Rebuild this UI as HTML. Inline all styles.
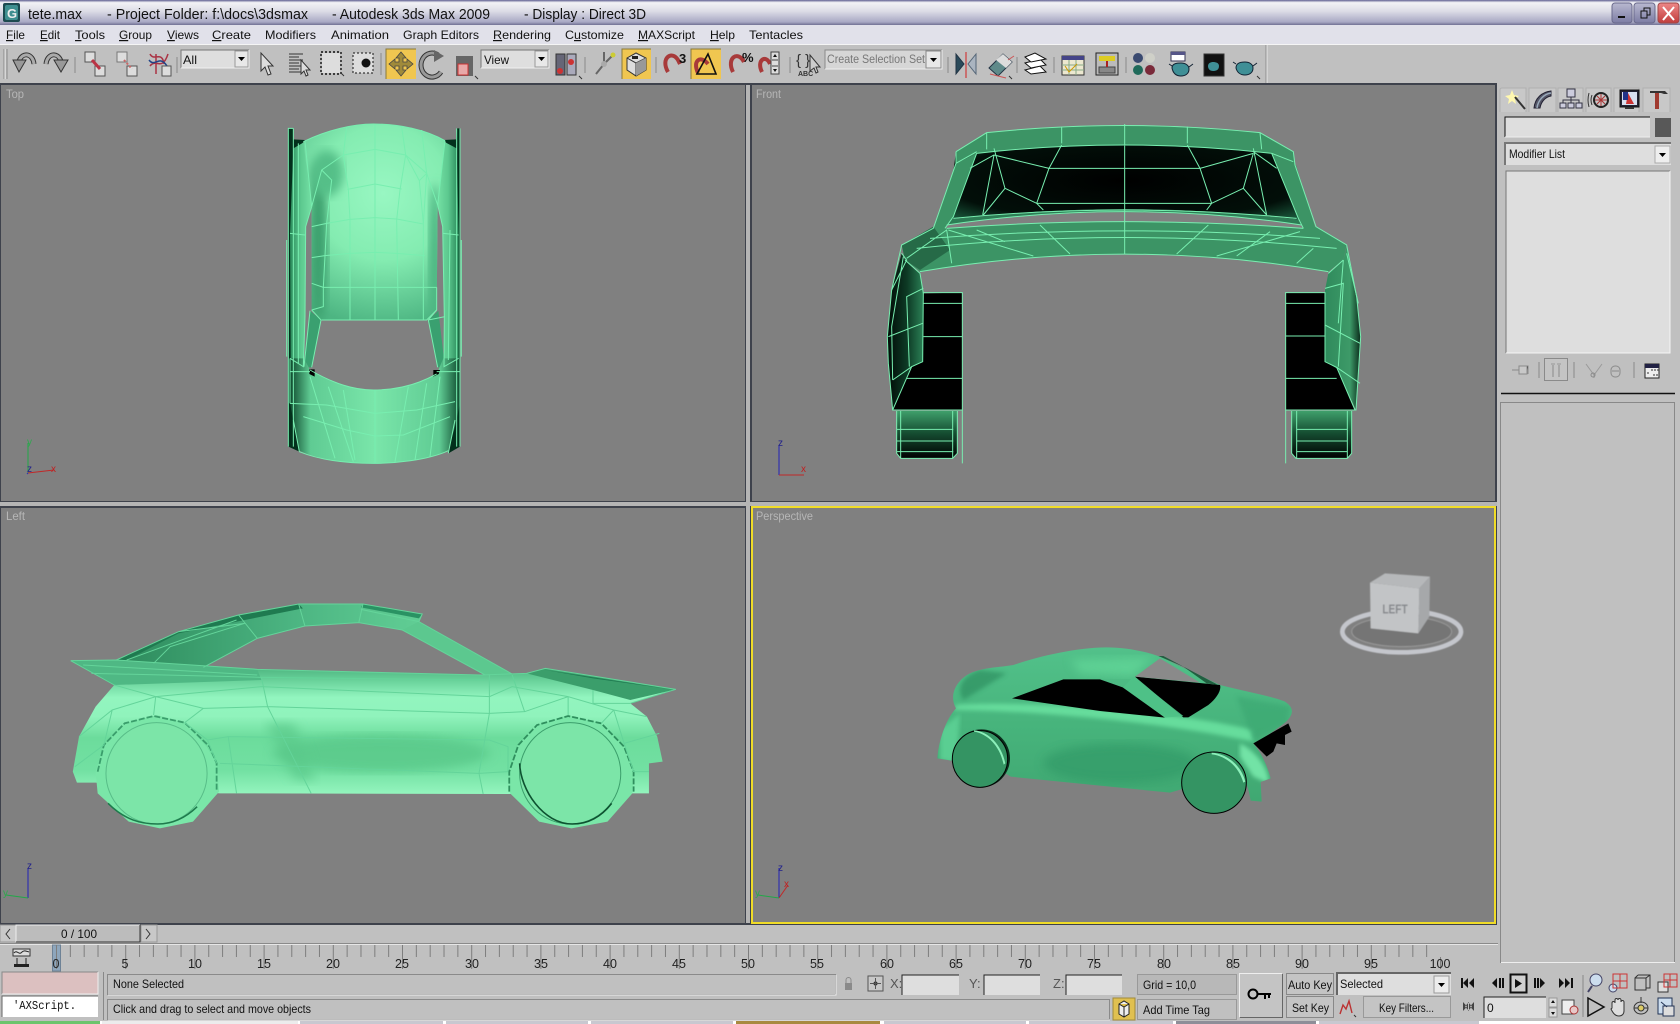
<!DOCTYPE html>
<html><head><meta charset="utf-8"><title>tete.max - Autodesk 3ds Max 2009</title>
<style>
html,body{margin:0;padding:0;background:#c0c0c0;overflow:hidden}
svg{display:block;font-family:"Liberation Sans",sans-serif}
text{font-size:12px;fill:#111}
.w,.w *{fill:none;stroke:#78eeb0;stroke-width:1;vector-effect:non-scaling-stroke}
.w2,.w2 *{fill:none;stroke:#64d49a;stroke-width:1;vector-effect:non-scaling-stroke}
.vl{fill:#b6b6b6;font-size:12px}
.ax{font-size:10px}
.n{font-size:12.5px;fill:#222;text-anchor:middle}
.ic{fill:none;stroke:#333;stroke-width:1}
</style></head><body>
<svg width="1680" height="1024" viewBox="0 0 1680 1024" xmlns="http://www.w3.org/2000/svg">
<defs>
<linearGradient id="tb" x1="0" y1="0" x2="0" y2="1"><stop offset="0" stop-color="#5e5e90"/><stop offset=".1" stop-color="#f2f2f6"/><stop offset=".45" stop-color="#dcdce6"/><stop offset=".88" stop-color="#a9a9c4"/><stop offset="1" stop-color="#6e6e92"/></linearGradient>
<linearGradient id="bb" x1="0" y1="0" x2="0" y2="1"><stop offset="0" stop-color="#b8b8d0"/><stop offset="1" stop-color="#7c7ca4"/></linearGradient>
<linearGradient id="rb" x1="0" y1="0" x2="0" y2="1"><stop offset="0" stop-color="#e88"/><stop offset="1" stop-color="#c03c3c"/></linearGradient>
<radialGradient id="topg" gradientUnits="userSpaceOnUse" cx="370" cy="250" r="400"><stop offset="0" stop-color="#98f7c2"/><stop offset=".5" stop-color="#84ecb1"/><stop offset="1" stop-color="#4db582"/></radialGradient>
<linearGradient id="topl" x1="0" y1="0" x2="1" y2="0"><stop offset="0" stop-color="#0f4a2e"/><stop offset=".12" stop-color="#5fcb93"/><stop offset=".5" stop-color="#7ae6aa"/><stop offset=".88" stop-color="#5fcb93"/><stop offset="1" stop-color="#0f4a2e"/></linearGradient>
<linearGradient id="tops" x1="0" y1="0" x2="1" y2="0"><stop offset="0" stop-color="#2a8a5a"/><stop offset=".5" stop-color="#5cc88f"/><stop offset="1" stop-color="#74e0a4"/></linearGradient>
<linearGradient id="tops2" x1="0" y1="0" x2="1" y2="0"><stop offset="0" stop-color="#74e0a4"/><stop offset=".5" stop-color="#5cc88f"/><stop offset="1" stop-color="#2a8a5a"/></linearGradient>
<radialGradient id="wind" cx=".5" cy=".5" r=".72"><stop offset="0" stop-color="#000"/><stop offset=".7" stop-color="#020f09"/><stop offset="1" stop-color="#1f6a48"/></radialGradient>
<linearGradient id="fl" x1="0" y1="0" x2="1" y2="0"><stop offset="0" stop-color="#010a06"/><stop offset=".55" stop-color="#0d3a25"/><stop offset="1" stop-color="#2b8055"/></linearGradient>
<linearGradient id="fr" x1="0" y1="0" x2="1" y2="0"><stop offset="0" stop-color="#2f8a5c"/><stop offset=".7" stop-color="#3d9a68"/><stop offset="1" stop-color="#0a2a1a"/></linearGradient>
<linearGradient id="ty" x1="0" y1="0" x2="0" y2="1"><stop offset="0" stop-color="#3f9f6b"/><stop offset=".45" stop-color="#165033"/><stop offset="1" stop-color="#000"/></linearGradient>
<linearGradient id="lb" x1="0" y1="0" x2="0" y2="1"><stop offset="0" stop-color="#3ea470"/><stop offset=".13" stop-color="#62cb94"/><stop offset=".28" stop-color="#92f5bf"/><stop offset=".42" stop-color="#90f3bc"/><stop offset=".58" stop-color="#6cdc9c"/><stop offset=".82" stop-color="#72e0a2"/><stop offset="1" stop-color="#94f5be"/></linearGradient>
<linearGradient id="la" x1="0" y1="0" x2="1" y2="0"><stop offset="0" stop-color="#2d8a5c"/><stop offset=".45" stop-color="#4cb582"/><stop offset="1" stop-color="#70dfa2"/></linearGradient>
<linearGradient id="pb" x1="0" y1="0" x2="0" y2="1"><stop offset="0" stop-color="#52c18a"/><stop offset=".5" stop-color="#47b47c"/><stop offset="1" stop-color="#40a872"/></linearGradient>
<filter id="b6"><feGaussianBlur stdDeviation="6"/></filter>
<filter id="b12"><feGaussianBlur stdDeviation="14"/></filter>
<filter id="b1"><feGaussianBlur stdDeviation="1.2"/></filter>
<clipPath id="pc"><path id="pbody" d="M52,385 C55,340 75,270 108,235 C85,195 110,150 150,130 C190,112 240,112 280,105 C350,80 470,52 560,52 C620,52 680,65 720,80 L900,165 C980,185 1060,200 1095,215 C1125,235 1120,255 1095,278 C1060,305 1030,325 1000,340 C1030,375 1045,420 1052,445 L1022,456 L1025,515 L992,512 C985,470 975,440 950,420 L880,450 L750,488 L272,440 L180,380 L95,392 Z"/></clipPath>
<clipPath id="rc"><path d="M130,95C200,60 280,42 340,42C420,42 500,60 555,92L533,285L530,600L500,630L185,630L155,600L155,290Z"/></clipPath>
</defs>

<rect width="1680" height="1024" fill="#c0c0c0"/>

<!-- title bar -->
<rect width="1680" height="25" fill="url(#tb)"/>
<rect x="3" y="3" width="17" height="19" rx="2" fill="#1c4a50"/><rect x="5" y="5" width="13" height="15" rx="2" fill="#3f8f90"/>
<text x="7" y="18" style="font-size:13px;font-weight:bold;fill:#eee">G</text>
<g>
<text x="28" y="19" textLength="54" lengthAdjust="spacingAndGlyphs" style="font-size:15px;fill:#111">tete.max</text>
<text x="107" y="19" textLength="201" lengthAdjust="spacingAndGlyphs" style="font-size:15px;fill:#111">- Project Folder: f:\docs\3dsmax</text>
<text x="332" y="19" textLength="158" lengthAdjust="spacingAndGlyphs" style="font-size:15px;fill:#111">- Autodesk 3ds Max  2009</text>
<text x="524" y="19" textLength="122" lengthAdjust="spacingAndGlyphs" style="font-size:15px;fill:#111">- Display : Direct 3D</text>
</g>
<rect x="1612" y="3" width="20" height="20" rx="3" fill="url(#bb)" stroke="#6a6a8c"/><rect x="1618" y="16" width="7" height="2" fill="#111"/>
<rect x="1634" y="3" width="21" height="20" rx="3" fill="url(#bb)" stroke="#6a6a8c"/><path d="M1641,11h6v7h-6zM1644,11V8h6v7h-3" fill="none" stroke="#111"/>
<rect x="1658" y="3" width="21" height="20" rx="3" fill="url(#rb)" stroke="#a04848"/><path d="M1663,7l11,13M1674,7l-11,13" stroke="#fff" stroke-width="2"/>

<!-- menu -->
<rect y="25" width="1680" height="19" fill="#e1e1ea"/>
<rect y="24" width="1680" height="1" fill="#7a7a9c"/>
<rect y="44" width="1680" height="1" fill="#f5f5f5"/>
<g>
<text x="6" y="39" textLength="19" lengthAdjust="spacingAndGlyphs"><tspan text-decoration="underline">F</tspan>ile</text>
<text x="40" y="39" textLength="20" lengthAdjust="spacingAndGlyphs"><tspan text-decoration="underline">E</tspan>dit</text>
<text x="75" y="39" textLength="30" lengthAdjust="spacingAndGlyphs"><tspan text-decoration="underline">T</tspan>ools</text>
<text x="119" y="39" textLength="33" lengthAdjust="spacingAndGlyphs"><tspan text-decoration="underline">G</tspan>roup</text>
<text x="167" y="39" textLength="32" lengthAdjust="spacingAndGlyphs"><tspan text-decoration="underline">V</tspan>iews</text>
<text x="212" y="39" textLength="39" lengthAdjust="spacingAndGlyphs"><tspan text-decoration="underline">C</tspan>reate</text>
<text x="265" y="39" textLength="51" lengthAdjust="spacingAndGlyphs">Modifiers</text>
<text x="331" y="39" textLength="58" lengthAdjust="spacingAndGlyphs">Animation</text>
<text x="403" y="39" textLength="76" lengthAdjust="spacingAndGlyphs">Graph Editors</text>
<text x="493" y="39" textLength="58" lengthAdjust="spacingAndGlyphs"><tspan text-decoration="underline">R</tspan>endering</text>
<text x="565" y="39" textLength="59" lengthAdjust="spacingAndGlyphs">C<tspan text-decoration="underline">u</tspan>stomize</text>
<text x="638" y="39" textLength="57" lengthAdjust="spacingAndGlyphs"><tspan text-decoration="underline">M</tspan>AXScript</text>
<text x="710" y="39" textLength="25" lengthAdjust="spacingAndGlyphs"><tspan text-decoration="underline">H</tspan>elp</text>
<text x="749" y="39" textLength="54" lengthAdjust="spacingAndGlyphs">Tentacles</text>
</g>

<!-- toolbar -->
<path d="M4,49V79M7,49V79" stroke="#8a8a8a"/><path d="M5,49V79" stroke="#eee"/>
<path d="M1266,45V83" stroke="#8e8e8e"/><path d="M1267,45V83" stroke="#e8e8e8"/>
<!-- undo / redo -->
<g fill="none"><path d="M34,64C33,54 23,51 19,61" stroke="#333" stroke-width="5"/><path d="M34,64C33,54 23,51 19,61" stroke="#aaa" stroke-width="3"/><path d="M13,60L26,60L19,72Z" fill="#999" stroke="#333"/>
<path d="M46,64C47,54 57,51 61,61" stroke="#333" stroke-width="5"/><path d="M46,64C47,54 57,51 61,61" stroke="#aaa" stroke-width="3"/><path d="M54,60L68,60L61,72Z" fill="#999" stroke="#333"/></g>
<path d="M75,57V73M177,57V73M381,53V75M585,57V73M656,57V73M790,57V73M948,57V73M1017,57V73M1054,57V73M1126,57V73" stroke="#8a8a8a"/>
<!-- link -->
<rect x="85" y="52" width="10" height="10" fill="#ddd" stroke="#555"/><rect x="95" y="66" width="10" height="10" fill="#ddd" stroke="#555"/><path d="M92,60L100,69" stroke="#b34" stroke-width="3"/>
<rect x="117" y="52" width="10" height="10" fill="#ddd" stroke="#777"/><rect x="127" y="66" width="10" height="10" fill="#ddd" stroke="#555"/><path d="M124,60L132,69" stroke="#c66" stroke-width="2" stroke-dasharray="2 2"/>
<path d="M150,54c4,8 12,-4 14,10M150,66c6,-8 12,6 18,-12M156,54v20" fill="none" stroke="#a34" stroke-width="1.5"/><path d="M149,60c6,8 10,-6 18,6" fill="none" stroke="#248" stroke-width="1.5"/><rect x="162" y="66" width="9" height="10" fill="#ddd" stroke="#555"/>
<!-- All dropdown -->
<rect x="181" y="50" width="68" height="18" fill="#dedede"/><path d="M181,68V50H249" fill="none" stroke="#777"/><path d="M181,68H249V50" fill="none" stroke="#f0f0f0"/>
<text x="183" y="64" textLength="14" lengthAdjust="spacingAndGlyphs" style="font-size:12px">All</text>
<rect x="235" y="51" width="13" height="16" fill="#e8e8e8" stroke="#999"/><path d="M238,57h7l-3.5,4z" fill="#000"/>
<!-- select -->
<path d="M261,53L261,71L265,67L268,75L271,74L268,66L273,66Z" fill="#ddd" stroke="#333"/>
<path d="M289,54h14M289,57h10M289,60h14M289,63h10M289,66h14M289,69h10M289,72h14" stroke="#333"/><path d="M301,60V74L304,71L306,76L308,75L306,70L310,70Z" fill="#ddd" stroke="#333"/>
<rect x="322" y="53" width="18" height="20" fill="#ddd"/><rect x="321" y="52" width="20" height="22" fill="none" stroke="#111" stroke-dasharray="2 2" stroke-width="1.4"/><path d="M341,73l3,3" stroke="#333"/>
<rect x="353" y="53" width="20" height="20" fill="#ddd" stroke="#111" stroke-dasharray="2 2"/><circle cx="366" cy="63" r="4.5" fill="#111"/>
<!-- move (active) -->
<rect x="386" y="49" width="30" height="30" fill="#f0c650"/><path d="M386,79V49H416" fill="none" stroke="#8a7a3a"/>
<path d="M401,52l5,6h-3v4h4v-3l6,5l-6,5v-3h-4v4h3l-5,6l-5,-6h3v-4h-4v3l-6,-5l6,-5v3h4v-4h-3z" fill="#a08a3a" stroke="#444" stroke-width=".8"/>
<!-- rotate -->
<path d="M438,55A11,12 0 1 0 441,72" fill="none" stroke="#333" stroke-width="5"/><path d="M438,55A11,12 0 1 0 441,72" fill="none" stroke="#999" stroke-width="3"/><path d="M434,50L444,56L434,62Z" fill="#666"/>
<!-- scale -->
<rect x="456" y="56" width="17" height="20" fill="#666"/><rect x="458" y="64" width="10" height="11" fill="#e8a8a8" stroke="#c33"/><path d="M475,76l3,3" stroke="#333"/>
<!-- View dropdown -->
<rect x="481" y="50" width="68" height="18" fill="#dedede"/><path d="M481,68V50H549" fill="none" stroke="#777"/><path d="M481,68H549V50" fill="none" stroke="#f0f0f0"/>
<text x="484" y="64" textLength="25" lengthAdjust="spacingAndGlyphs">View</text>
<rect x="535" y="51" width="13" height="16" fill="#e8e8e8" stroke="#999"/><path d="M538,57h7l-3.5,4z" fill="#000"/>
<!-- pivot -->
<rect x="556" y="54" width="9" height="21" fill="#667" stroke="#333"/><rect x="567" y="54" width="9" height="21" fill="#aab" stroke="#333"/><circle cx="560" cy="71" r="3" fill="#c33"/><circle cx="571" cy="62" r="3" fill="#c33"/><path d="M579,76l3,3" stroke="#333"/>
<!-- manipulate -->
<path d="M604,64L596,74M604,64L612,56M604,64V52" stroke="#666" stroke-width="2"/><circle cx="604" cy="64" r="3" fill="#aaa"/><circle cx="613" cy="55" r="2.5" fill="#cc3"/>
<!-- keyboard active -->
<rect x="622" y="49" width="29" height="30" fill="#f0c650"/><path d="M622,79V49H651" fill="none" stroke="#8a7a3a"/>
<path d="M627,58L636,53L646,58L646,70L636,76L627,70Z" fill="#ddd" stroke="#333"/><path d="M627,58L636,63L646,58M636,63V76" fill="none" stroke="#333"/><path d="M636,63L646,58V70L636,76Z" fill="#999"/><rect x="632" y="56" width="6" height="3" fill="#222"/>
<!-- magnets -->
<g fill="none" stroke-width="4">
<path d="M668,72C660,58 672,50 678,60L680,64" stroke="#a83a3a"/><path d="M703,72C696,60 704,52 711,58" stroke="#a83a3a"/><path d="M733,72C726,58 738,50 744,62" stroke="#a83a3a"/><path d="M762,72C756,60 766,54 770,64" stroke="#a83a3a"/></g>
<text x="679" y="63" style="font-weight:bold;font-size:13px;fill:#111">3</text>
<rect x="691" y="49" width="30" height="30" fill="#f0c650"/><path d="M691,79V49H721" fill="none" stroke="#8a7a3a"/>
<g fill="none"><path d="M698,73C692,60 701,55 708,64" stroke="#a83a3a" stroke-width="4"/><path d="M708,54L716,74H697Z" stroke="#111" stroke-width="1.6"/></g>
<text x="742" y="62" style="font-weight:bold;font-size:13px;fill:#111">%</text>
<rect x="771" y="52" width="8" height="22" fill="#ddd" stroke="#444"/><path d="M772,60h6M772,66h6" stroke="#444"/><path d="M775,54l-2,3h4zM775,72l-2,-3h4z" fill="#111"/>
<!-- named sel -->
<text x="796" y="65" style="font-size:15px;fill:#333">{ }</text><text x="798" y="76" style="font-size:7px;font-weight:bold;fill:#333">ABC</text><path d="M810,55V71L814,68L816,73L818,72L816,67L820,67Z" fill="#ccc" stroke="#333"/>
<!-- create selection set -->
<rect x="825" y="50" width="117" height="19" fill="#d6d6d6"/><path d="M825,69V50H942" fill="none" stroke="#8a8a8a"/><path d="M825,69H942V50" fill="none" stroke="#eee"/>
<text x="827" y="63" textLength="98" lengthAdjust="spacingAndGlyphs" style="font-size:12px;fill:#777">Create Selection Set</text>
<rect x="926" y="51" width="15" height="17" fill="#e8e8e8" stroke="#888"/><path d="M930,58h7l-3.5,4z" fill="#000"/>
<!-- mirror, align -->
<path d="M956,54L964,64L956,74Z" fill="#2a4a5a" stroke="#234"/><path d="M976,54L968,64L976,74Z" fill="#aab4c0" stroke="#567"/><path d="M966,52V78" stroke="#c55" stroke-width="1.5"/>
<path d="M989,68L1003,54L1012,62L998,76Z" fill="#5f8a8a" stroke="#234"/><path d="M1003,54L1012,62L1006,68L996,60Z" fill="#ddd"/><path d="M1008,60L1014,56M990,74L1006,78" stroke="#c55" stroke-width="1"/><path d="M1009,76l3,3" stroke="#333"/>
<!-- layers -->
<g fill="#fff" stroke="#111"><path d="M1025,70L1040,66L1046,72L1031,74Z"/><path d="M1025,63L1040,59L1046,65L1031,68Z"/><path d="M1025,57L1035,53L1046,59L1031,62Z"/></g>
<!-- curve -->
<rect x="1062" y="56" width="22" height="19" fill="#ece8d0" stroke="#333"/><rect x="1062" y="56" width="22" height="4" fill="#448"/><path d="M1069,60V75M1076,60V75M1062,65H1084M1062,70H1084" stroke="#8a8"/><path d="M1065,66l4,6l8,-8" fill="none" stroke="#c90"/>
<!-- schematic -->
<rect x="1096" y="53" width="22" height="22" fill="#bbb" stroke="#222"/><rect x="1099" y="56" width="16" height="5" fill="#dc2"/><rect x="1099" y="67" width="16" height="6" fill="#888" stroke="#444"/><path d="M1107,61V67" stroke="#a22" stroke-width="2"/>
<!-- materials -->
<circle cx="1138" cy="58" r="5" fill="#3a4a70"/><circle cx="1150" cy="58" r="5" fill="#cfd0c8"/><circle cx="1138" cy="70" r="5" fill="#1f6a5a"/><circle cx="1150" cy="70" r="5" fill="#7a2a3a"/>
<!-- render setup -->
<rect x="1171" y="52" width="14" height="9" fill="#fff" stroke="#335"/><rect x="1171" y="52" width="14" height="3" fill="#558"/>
<path d="M1172,68c0,-5 6,-5 9,-5c4,0 8,2 8,6c0,5 -4,7 -8,7c-5,0 -8,-3 -9,-8z" fill="#3f8f96" stroke="#123"/><path d="M1189,67l4,-3M1172,66l-3,-2" stroke="#123"/>
<rect x="1204" y="54" width="20" height="22" fill="#111" stroke="#333"/><path d="M1208,66c0,-3 3,-4 5,-4c3,0 6,1 6,4c0,4 -3,5 -6,5s-5,-2 -5,-5z" fill="#3f8f96"/>
<path d="M1236,68c0,-5 4,-6 9,-6c4,0 8,2 8,6c0,5 -4,7 -8,7c-5,0 -8,-3 -9,-7z" fill="#3f8f96" stroke="#123"/><path d="M1253,66l4,-3M1236,64l-3,-2" stroke="#123"/><path d="M1257,76l3,3" stroke="#333"/>

<!-- viewport frame -->
<rect x="0" y="83" width="1497" height="842" fill="#3e424c"/>
<rect x="746" y="85" width="4" height="838" fill="#b5b5b5"/>
<rect x="0" y="502" width="1497" height="4" fill="#b5b5b5"/>
<rect x="1" y="85" width="744" height="416" fill="#808080"/>
<rect x="752" y="85" width="743" height="416" fill="#808080"/>
<rect x="1" y="508" width="744" height="415" fill="#808080"/>
<rect x="752" y="507" width="743" height="416" fill="#808080" stroke="#f0dc28" stroke-width="2"/>
<text class="vl" x="6" y="98" textLength="18" lengthAdjust="spacingAndGlyphs">Top</text>
<text class="vl" x="756" y="98" textLength="25" lengthAdjust="spacingAndGlyphs">Front</text>
<text class="vl" x="6" y="520" textLength="19" lengthAdjust="spacingAndGlyphs">Left</text>
<text class="vl" x="756" y="520" textLength="57" lengthAdjust="spacingAndGlyphs">Perspective</text>

<!-- axis -->
<g><path d="M28,473V443" stroke="#22a848"/><path d="M28,473L54,470" stroke="#c02828"/><path d="M28,473L27,474" stroke="#2828c0"/>
<text class="ax" x="27" y="445" style="fill:#2ea84e">y</text><text class="ax" x="27" y="472" style="fill:#20208a">z</text><text class="ax" x="51" y="472" style="fill:#c02020">x</text></g>
<g><path d="M779,475V445" stroke="#2222b8"/><path d="M779,475H804" stroke="#c02828"/>
<text class="ax" x="778" y="446" style="fill:#20208a">z</text><text class="ax" x="801" y="472" style="fill:#c02020">x</text></g>
<g><path d="M28,898V868" stroke="#2222b8"/><path d="M28,898L6,895" stroke="#22a848"/>
<text class="ax" x="27" y="869" style="fill:#20208a">z</text><text class="ax" x="3" y="896" style="fill:#2ea84e">y</text></g>
<g><path d="M779,898V868" stroke="#2222b8"/><path d="M779,898L788,885" stroke="#c02828"/><path d="M779,898L758,895" stroke="#22a848"/>
<text class="ax" x="778" y="871" style="fill:#20208a">z</text><text class="ax" x="784" y="887" style="fill:#c02020">x</text><text class="ax" x="755" y="896" style="fill:#2ea84e">y</text></g>

<!-- TOP car -->
<g transform="translate(260,110) scale(.33333)">
<path d="M85,55H100V88L135,90L112,118L100,300L98,760L100,930L118,1025L85,1010Z" fill="#03301c"/>
<path d="M100,55H85V1010" fill="none" stroke="#78eeb0" stroke-width="3"/>
<path d="M590,55H600V1010L565,1030L585,930L590,760L585,300L575,118L552,90L588,88Z" fill="#03301c"/>
<path d="M100,115L135,95L155,285L137,350L135,620L130,770L92,745L90,370Z" fill="url(#tops)"/>
<path d="M590,115L552,95L533,285L548,350L553,620L552,770L596,745L596,370Z" fill="url(#tops2)"/>
<path d="M130,95C200,60 280,42 340,42C420,42 500,60 555,92L533,285L530,600L500,630L185,630L155,600L155,290Z" fill="url(#topg)"/>
<g clip-path="url(#rc)"><ellipse cx="175" cy="400" rx="28" ry="240" fill="#3ca06e" filter="url(#b12)"/><ellipse cx="525" cy="420" rx="18" ry="200" fill="#4ab27f" filter="url(#b12)"/><ellipse cx="200" cy="190" rx="50" ry="70" fill="#54bf88" filter="url(#b12)"/></g>
<path d="M150,602L183,630L155,772H132Z" fill="#3aa070"/><path d="M535,602L505,630L533,772H555Z" fill="#3aa070"/>
<path d="M150,780C220,820 280,840 340,840C420,840 480,820 530,792L550,745L600,745V880L585,950L565,1020C500,1052 400,1060 340,1060C260,1060 180,1050 118,1022L100,930L90,880V745L132,745Z" fill="url(#topl)"/>
<path d="M148,778h16v22l-16,-8zM520,780h20l-4,12l-16,8z" fill="#000"/>
<g class="w">
<path d="M130,95C200,60 280,42 340,42C420,42 500,60 555,92"/>
<path d="M345,42V630M345,840V1060M260,50L250,135L265,240L270,330L270,630M425,50L437,135L420,240L410,330L415,630M485,60L500,190L490,340L490,630"/>
<path d="M155,290L185,180L250,135L345,118L437,135L500,190L533,285M262,238L345,222L425,237M155,350L200,340L270,328L345,323L410,327L490,342M155,443L195,437L270,430L345,427L410,430L495,437M155,520L190,532H530M190,532V590L155,600M185,630H500L530,600M530,532V600M185,180L215,210L200,340L195,437L190,532M500,190L478,212L490,340M437,135L478,212"/>
<path d="M100,55V1010M115,100L115,760M135,95L155,290M155,290L137,350L135,620L130,770L90,745M155,600L183,630L155,772M132,770L150,602M90,370L135,375M555,92L533,285L548,350L553,620L552,770L596,745M530,600L505,630L533,772M555,620L505,630M590,55V1010M600,55V1010M80,390V740M604,390V740M570,360L565,750M90,745V880M596,375L550,370"/>
<path d="M150,780C220,820 280,840 340,840C420,840 480,820 530,792M150,800L225,1045M205,830L280,1055M250,840L285,1050M445,830L405,1055M500,820L465,1050M540,800L510,1040M90,785H150M530,785H600M90,880L200,885L345,910L470,900L585,875M130,920L260,960L345,978L430,975L570,920M118,1025C180,1050 260,1060 340,1060C400,1060 500,1052 565,1022M100,930L118,1025M585,930L565,1030"/>
</g></g>

<!-- FRONT car -->
<g transform="translate(870,110) scale(.33333)">
<path d="M258,125L320,125Q760,65 1205,125L1292,330Q764,265 230,330Z" fill="url(#wind)"/>
<path d="M230,330Q764,265 1292,330L1295,345Q764,268 230,345Z" fill="#2d7d55"/>
<path d="M258,125L350,68Q760,25 1170,68L1270,125L1275,165L1205,130Q760,80 320,130L258,160Z" fill="#3c9465"/>
<path d="M258,160L320,130L250,320L225,355L190,360Z" fill="#3c9465"/><path d="M1278,165L1205,130L1285,325L1300,355L1338,360Z" fill="#3c9465"/>
<path d="M160,550L277,548V900H68L122,770L158,755Z" fill="#000"/>
<path d="M1247,548L1365,548V755L1400,772L1455,900H1247Z" fill="#000"/>
<path d="M95,405L190,350L230,355Q764,315 1300,355L1338,350L1430,405L1420,450L1375,485Q764,380 150,485L105,450Z" fill="#3c9465"/>
<path d="M95,405L190,350L240,420L150,480L105,450Z" fill="#184e33" opacity=".6"/>
<path d="M95,430L105,450L150,490L160,550L158,755L125,770L68,900L55,760L52,680L65,540Z" fill="url(#fl)"/>
<path d="M1430,410L1460,560L1472,680L1458,900L1400,775L1365,755L1365,540L1375,490L1420,450Z" fill="url(#fr)"/>
<path d="M80,903H262V1030L248,1045H92L80,1030Z" fill="url(#ty)"/>
<path d="M1265,903H1445V1030L1432,1045H1278L1265,1030Z" fill="url(#ty)"/>
<g class="w">
<path d="M258,125L350,68Q760,25 1170,68L1270,125L1275,165L1338,350L1430,405L1460,560L1472,680L1458,900H1247V548H1365V755L1400,772L1455,900"/>
<path d="M258,125V160L190,355L95,405L65,540L52,680L55,760L68,900H277V548H160L158,755L125,770L68,900"/>
<path d="M350,68V118M575,50V100M952,50V100M1170,68L1175,118M764,42V432M320,130Q760,80 1205,130M258,160L320,125M1270,155L1205,130M320,130L250,320L225,355M1205,130L1285,325L1300,355"/>
<path d="M372,115L405,235L340,315M372,135L338,315M372,135L537,175L500,280L520,300M575,105L537,175M537,175H990M952,105L990,175L1025,280L1010,300M1150,130L990,175M1150,130L1120,235L1190,315M1150,115L1190,315M405,235L500,280M1120,235L1025,280M500,280H1025M372,135L300,175M1150,125L1220,175"/>
<path d="M230,345Q764,265 1295,345M250,325Q764,275 1280,325"/>
<path d="M230,355Q764,315 1300,355M150,485Q764,380 1375,485M180,385Q764,340 1350,385M140,415Q764,350 1400,415M110,445L230,360L245,460M510,345L600,432M1015,345L920,432M235,360L490,438M405,395L320,360M1290,365L1040,438M1200,365L1100,438M1330,415L1280,460M105,450L150,490L160,550M95,430L110,450L65,540M160,535L110,560L118,770M55,680L158,640M68,810L125,770M100,440L65,650L68,810M1375,490L1420,450M1365,535L1420,520L1405,770M1365,645L1470,700M1400,772L1470,820M1430,430L1465,580M1420,450L1405,640"/>
<path d="M160,680H277M160,580L277,580M110,805H277M1247,580H1365M1247,678H1365M1247,805H1400"/>
<path d="M80,903V1030L92,1045H248L262,1030V903M92,903V1045M248,903V1045M80,958H250M80,993H250M80,1025H250M277,900V1060"/>
<path d="M1265,903V1030L1278,1045H1432L1445,1030V903M1280,903V1045M1432,903V1045M1280,958H1432M1280,993H1432M1280,1025H1432M1247,900V1060"/>
</g></g>

<!-- LEFT car -->
<g transform="translate(50,590) scale(.4145,.33333)">
<path d="M160,210L310,125L455,75L600,42H755L898,72L890,95L1115,252L1050,255L850,120L745,98L615,108L500,145L370,232Z" fill="url(#la)"/>
<path d="M160,210L310,125L455,75L600,42L610,55L470,90L310,130L185,210Z" fill="#1f7a50"/>
<path d="M755,42L898,72L890,85L750,52Z" fill="#2a9263"/>
<path d="M890,95L1115,252L1050,255L850,120Z" fill="#5cc88f"/>
<path d="M50,212L160,210L500,238L1040,255L1150,250L1195,235L1510,298L1400,340L1440,380L1465,440L1478,515L1445,520V610H1405L1090,612L410,610L110,578H65L55,545L70,440L110,350L155,285Z" fill="url(#lb)"/>
<path d="M1195,235L1510,298L1400,330L1310,300L1150,250Z" fill="#3b9e6b"/>
<path d="M1195,240L1500,298L1310,265Z" fill="#1e7a50"/>
<path d="M50,212L160,210L500,238L510,270L155,285Z" fill="#4fb884"/>
<ellipse cx="800" cy="490" rx="260" ry="55" fill="#5ac98a" filter="url(#b12)" opacity=".85"/>
<path d="M520,400L590,400L640,570L590,570Z" fill="#5ac98a" filter="url(#b12)" opacity=".7"/>
<path d="M258,375L325,398L378,470L402,520L408,605L345,695L265,715L190,695L115,610L110,545L130,465L180,400Z" fill="#7ae6a8"/>
<path d="M1250,375L1330,400L1385,470L1408,545L1405,610L1345,695L1258,715L1180,695L1110,610L1108,545L1130,465L1175,405Z" fill="#7ae6a8"/>
<ellipse cx="257" cy="550" rx="122" ry="152" fill="#7ce5a8" stroke="#58bd88" stroke-width="1" vector-effect="non-scaling-stroke"/>
<ellipse cx="1255" cy="550" rx="122" ry="152" fill="#7ce5a8" stroke="#3b9e6b" stroke-width="1" vector-effect="non-scaling-stroke"/>
<path d="M115,545L130,465L180,400L250,378L325,398L385,470L402,520V605" fill="none" stroke="#3a9e6c" stroke-width="1.800" stroke-dasharray="6 2" vector-effect="non-scaling-stroke"/>
<path d="M1108,605V545L1130,465L1175,405L1250,378L1330,400L1385,470L1408,545V605" fill="none" stroke="#2f8f5e" stroke-width="1.800" stroke-dasharray="6 2" vector-effect="non-scaling-stroke"/>
<path d="M140,640C180,690 220,702 260,702C300,702 330,680 355,650" fill="none" stroke="#1e7a4c" stroke-width="1.500" vector-effect="non-scaling-stroke"/>
<path d="M1133,520C1135,600 1190,702 1260,702C1300,702 1330,680 1355,640" fill="none" stroke="#0d5230" stroke-width="1.600" vector-effect="non-scaling-stroke"/>
<g class="w2">
<path d="M50,212L160,210L500,238L1040,255L1150,250L1195,235L1510,298L1400,340"/>
<path d="M50,212L155,285M80,225L500,255M100,250L510,262L1050,270M160,210L310,125L455,75L600,42H755L898,72L890,95L1115,252M370,232L500,145L615,108L745,98L850,120L1050,255M600,42L615,108M755,42L745,98M455,75L500,145M310,125L470,100M250,220L290,170L470,100M185,210L450,90M750,58L890,95"/>
<path d="M155,285L255,320L370,355L525,350L1060,370L1145,365L1250,320L1360,360L1440,380M255,320L510,290L1060,320M1250,320L1115,290L1060,320M510,262L525,350L630,610M1060,255V370L1035,550L1045,612M1115,255L1145,365M70,440L150,360L255,320L250,375M370,355L325,398M150,360L130,465L60,530M1360,360L1385,460L1470,430M1310,300V340L1400,340"/>
<path d="M380,450L430,440L1060,450L1105,470L1105,545M430,440L450,610M410,520L1035,550L1105,545M325,398L380,450L402,520M1250,320V375M1330,400L1360,360M1385,460L1408,545H1445"/>
</g></g>

<!-- PERSPECTIVE car -->
<g transform="translate(920,630) scale(.33333)">
<use href="#pbody" fill="url(#pb)"/>
<g clip-path="url(#pc)">
<path d="M100,240C300,240 700,270 1000,335L1000,300C750,240 300,210 110,225Z" fill="#66dd9c" filter="url(#b6)"/>
<path d="M180,120C120,140 110,180 130,210L260,130Z" fill="#2f8f60" filter="url(#b6)" opacity=".7"/>
<ellipse cx="600" cy="400" rx="230" ry="60" fill="#339a68" filter="url(#b12)" opacity=".7"/>
<path d="M960,340C1020,370 1050,430 1045,460L1000,440L960,380Z" fill="#72e3a6" filter="url(#b6)"/>
<path d="M450,90L700,80L640,140L480,130Z" fill="#62d698" filter="url(#b12)" opacity=".8"/>
<path d="M950,200L1110,230L1100,280L1000,330Z" fill="#3da873" filter="url(#b6)" opacity=".7"/>
<path d="M60,300L120,250L110,400L60,390Z" fill="#5ace92" filter="url(#b6)"/>
</g>
<path d="M276,205L430,148H540L608,172L735,263L540,243Z" fill="#000"/>
<path d="M645,140L900,165C905,180 890,205 865,225L805,262H790Z" fill="#000"/>
<path d="M720,85L645,140L840,158Z" fill="#8a8a8a"/>
<path d="M715,78L730,78L895,165L860,160L790,110Z" fill="#215e40"/>
<path d="M640,140L790,258L735,263L610,172Z" fill="#4fc287" opacity=".9"/>
<path d="M1000,340L1105,280L1115,305L1095,315L1095,345L1070,340L1060,365L1040,380Z" fill="#000"/>
<ellipse cx="184" cy="385" rx="86" ry="87" fill="#0a2e1c"/>
<ellipse cx="180" cy="387" rx="83" ry="85" fill="#349463" stroke="#000" stroke-width="3"/>
<path d="M162,301C205,303 245,345 256,400L251,404C240,350 205,312 162,305Z" fill="#8cf0ba"/>
<ellipse cx="882" cy="458" rx="97" ry="92" fill="#349463" stroke="#000" stroke-width="3"/>
<path d="M875,368C925,372 965,410 976,455L970,458C958,414 922,378 875,373Z" fill="#8cf0ba"/>
</g>

<!-- nav cube -->
<g transform="translate(1320,560) scale(.33333)" filter="url(#b1)">
<ellipse cx="245" cy="215" rx="178" ry="62" fill="none" stroke="#c4c6cc" stroke-width="14"/>
<ellipse cx="245" cy="215" rx="150" ry="45" fill="#757575" stroke="#999" stroke-width="3"/>
<path d="M150,68L298,85L295,220L152,205Z" fill="#c2c4c6"/>
<path d="M150,68L195,40L330,50L298,85Z" fill="#b6b8ba"/>
<path d="M298,85L330,50L328,170L295,220Z" fill="#a6a8aa"/>
<text x="187" y="160" textLength="76" lengthAdjust="spacingAndGlyphs" style="font-size:38px;font-weight:bold;fill:#85888c">LEFT</text>
</g>

<!-- slider -->
<rect x="0" y="925" width="16" height="17" fill="#c8c8c8" stroke="#999"/><path d="M10,929l-4,5l4,5" fill="none" stroke="#333"/>
<rect x="16" y="925" width="124" height="17" fill="#bcbcbc"/><path d="M16,942V925H140" fill="none" stroke="#eee"/><path d="M16,942H140V925" fill="none" stroke="#333"/>
<text x="61" y="938" textLength="36" lengthAdjust="spacingAndGlyphs">0 / 100</text>
<rect x="141" y="925" width="16" height="17" fill="#c8c8c8" stroke="#999"/><path d="M146,929l4,5l-4,5" fill="none" stroke="#333"/>
<path d="M0,943.5H1500" stroke="#8a8a8a"/><path d="M0,944.5H1500" stroke="#e6e6e6"/>
<!-- timeline -->
<rect x="13" y="949" width="17" height="7" fill="#ddd" stroke="#333"/><path d="M14,953c3,-4 5,3 8,-1c2,-2 4,-1 7,0" fill="none" stroke="#222"/>
<path d="M17,958v6M26,958v6M14,964.5h15" stroke="#222"/><path d="M14,966h15" stroke="#222" stroke-width="2"/>
<rect x="52.5" y="945" width="8" height="26" fill="#8ea6bc" stroke="#6e8296"/>
<path d="M56,951H1440" stroke="#7e7e7e" stroke-width="12" stroke-dasharray="1 12.84" fill="none"/>
<path d="M56.5,957V969M125.7,957V969M194.9,957V969M264.1,957V969M333.3,957V969M402.5,957V969M471.7,957V969M540.9,957V969M610.1,957V969M679.3,957V969M748.5,957V969M817.7,957V969M886.9,957V969M956.1,957V969M1025.3,957V969M1094.5,957V969M1163.7,957V969M1232.9,957V969M1302.1,957V969M1371.3,957V969M1440.5,957V969" stroke="#7e7e7e"/>
<g>
<text class="n" x="56" y="968">0</text><text class="n" x="125" y="968">5</text><text class="n" x="195" y="968">10</text><text class="n" x="264" y="968">15</text><text class="n" x="333" y="968">20</text><text class="n" x="402" y="968">25</text><text class="n" x="472" y="968">30</text><text class="n" x="541" y="968">35</text><text class="n" x="610" y="968">40</text><text class="n" x="679" y="968">45</text><text class="n" x="748" y="968">50</text><text class="n" x="817" y="968">55</text><text class="n" x="887" y="968">60</text><text class="n" x="956" y="968">65</text><text class="n" x="1025" y="968">70</text><text class="n" x="1094" y="968">75</text><text class="n" x="1164" y="968">80</text><text class="n" x="1233" y="968">85</text><text class="n" x="1302" y="968">90</text><text class="n" x="1371" y="968">95</text><text class="n" x="1440" y="968">100</text>
</g>
<path d="M1500,943H1680" stroke="#c0c0c0" stroke-width="2"/>

<!-- status -->
<rect x="2" y="972" width="96" height="22" fill="#dcc0c0"/><path d="M2,994V972H98" fill="none" stroke="#888"/><path d="M2,994H98V972" fill="none" stroke="#eee"/>
<rect x="2" y="996" width="96" height="21" fill="#fff"/><path d="M2,1017V996H98" fill="none" stroke="#666"/>
<text x="13" y="1009" textLength="63" lengthAdjust="spacingAndGlyphs" style="font-family:'Liberation Mono',monospace;font-size:12px">'AXScript.</text>
<path d="M103.5,972V1020" stroke="#888"/>
<rect x="107.5" y="974.5" width="728" height="20" fill="#c0c0c0" stroke="#8a8a8a"/><path d="M108,995H836V975" fill="none" stroke="#eee"/>
<text x="113" y="988" textLength="71" lengthAdjust="spacingAndGlyphs">None Selected</text>
<rect x="107.5" y="999.5" width="1002" height="20" fill="#c0c0c0" stroke="#8a8a8a"/><path d="M108,1020H1110" fill="none" stroke="#eee"/>
<text x="113" y="1013" textLength="198" lengthAdjust="spacingAndGlyphs">Click and drag to select and move objects</text>
<rect x="845" y="983" width="7" height="7" fill="#8a8a8a"/><path d="M846,983v-3a2.500,2.500 0 0 1 5,0v3" fill="none" stroke="#8a8a8a"/>
<rect x="868" y="976" width="15" height="15" fill="#c8c8c8" stroke="#555"/><circle cx="875.500" cy="983.500" r="2" fill="#333"/><path d="M875.500,978v11M870,983.500h11" stroke="#555"/>
<text x="890" y="988" style="fill:#555;font-size:13px">X:</text>
<text x="969" y="988" style="fill:#555;font-size:13px">Y:</text>
<text x="1053" y="988" style="fill:#555;font-size:13px">Z:</text>
<g fill="#dedede"><rect x="902" y="975" width="57" height="20"/><rect x="984" y="975" width="56" height="20"/><rect x="1066" y="975" width="56" height="20"/></g>
<path d="M902,995V975H959M984,995V975H1040M1066,995V975H1122" fill="none" stroke="#222"/>
<rect x="1137.500" y="974.500" width="99" height="20" fill="#b8b8b8" stroke="#999"/>
<text x="1143" y="989" textLength="53" lengthAdjust="spacingAndGlyphs">Grid = 10,0</text>
<rect x="1113" y="998" width="22" height="22" fill="#e0c050" stroke="#a08a3a"/><path d="M1119,1004l5,-3l5,3v10l-5,3l-5,-3zM1119,1004l5,3l5,-3M1124,1007v10" fill="#eee" stroke="#222"/>
<rect x="1137.500" y="999.500" width="99" height="20" fill="#c0c0c0" stroke="#999"/>
<text x="1143" y="1014" textLength="67" lengthAdjust="spacingAndGlyphs">Add Time Tag</text>
<rect x="1239.500" y="973.500" width="43" height="44" fill="#c4c4c4"/><path d="M1239.500,1017V973.500H1282" fill="none" stroke="#eee"/><path d="M1240,1017.500H1282.500V974" fill="none" stroke="#666"/>
<circle cx="1253" cy="994" r="4.500" fill="none" stroke="#000" stroke-width="2"/><path d="M1258,994H1271M1265,994v5M1269,994v4" stroke="#000" stroke-width="2"/>
<rect x="1286.500" y="973.500" width="47" height="21" fill="#c4c4c4" stroke="#888"/>
<text x="1288" y="989" textLength="44" lengthAdjust="spacingAndGlyphs">Auto Key</text>
<rect x="1286.500" y="996.500" width="47" height="21" fill="#c4c4c4" stroke="#888"/>
<text x="1292" y="1012" textLength="37" lengthAdjust="spacingAndGlyphs">Set Key</text>
<rect x="1337" y="973" width="114" height="22" fill="#dedede"/><path d="M1337,995V973H1451" fill="none" stroke="#666" stroke-width="2"/>
<text x="1340" y="988" textLength="43" lengthAdjust="spacingAndGlyphs">Selected</text>
<rect x="1434" y="976" width="15" height="17" fill="#ececec" stroke="#999"/><path d="M1438,983h7l-3.500,4z" fill="#000"/>
<path d="M1340,1014l3,-9l3,4l3,-8l3,12" fill="none" stroke="#b33" stroke-width="1.400"/><path d="M1354,1015l2,2" stroke="#333"/>
<rect x="1363.500" y="996.500" width="87" height="21" fill="#c4c4c4" stroke="#999"/>
<text x="1379" y="1012" textLength="55" lengthAdjust="spacingAndGlyphs">Key Filters...</text>
<!-- transport -->
<g fill="#111">
<path d="M1461,978h2v10h-2zM1468,978v10l-5,-5zM1474,978v10l-5,-5z"/>
<path d="M1497,978v10l-5,-5zM1499,978h2v10h-2zM1502,978h2v10h-2z"/>
<path d="M1534,978h2v10h-2zM1537,978h2v10h-2zM1540,978v10l5,-5z"/>
<path d="M1559,978v10l5,-5zM1565,978v10l5,-5zM1571,978h2v10h-2z"/>
<rect x="1510.500" y="974.500" width="16" height="18" fill="#d0d0d0" stroke="#111" stroke-width="2"/><path d="M1515,979v9l7,-4.500z"/>
<path d="M1463,1002v9l4,-4.500zM1469,1002v9l-4,-4.500zM1468,1002v9l4,-4.500zM1474,1002v9l-4,-4.500z" fill="#444"/>
</g>
<path d="M1583,975V1017" stroke="#888"/>
<rect x="1484" y="997" width="62" height="21" fill="#dedede"/><path d="M1484,1018V997H1546" fill="none" stroke="#222"/>
<text x="1487" y="1012">0</text>
<rect x="1549" y="998" width="8" height="9" fill="#ddd" stroke="#999"/><rect x="1549" y="1008" width="8" height="9" fill="#ddd" stroke="#999"/><path d="M1553,1000l-2,3h4zM1553,1015l-2,-3h4z" fill="#111"/>
<rect x="1562" y="1000" width="12" height="14" fill="#eee" stroke="#444"/><circle cx="1574" cy="1010" r="4" fill="#e8c8c8" stroke="#a33"/>
<!-- viewport nav -->
<circle cx="1596" cy="980" r="6" fill="#cde" stroke="#446"/><path d="M1592,986l-4,6" stroke="#446" stroke-width="2"/>
<circle cx="1613" cy="988" r="4" fill="#cde" stroke="#446"/><rect x="1613" y="974" width="14" height="14" fill="none" stroke="#c33"/><path d="M1620,974v14M1613,981h14" stroke="#c33"/>
<rect x="1635" y="978" width="11" height="12" fill="none" stroke="#333"/><path d="M1638,975h12v13h-4M1635,978l3,-3M1646,978l4,-3" fill="none" stroke="#333"/>
<rect x="1658" y="982" width="10" height="10" fill="#ddd" stroke="#333"/><rect x="1664" y="974" width="13" height="13" fill="none" stroke="#c33"/><path d="M1670,974v13M1664,980h13" stroke="#c33"/>
<path d="M1588,998L1604,1007L1588,1016Z" fill="none" stroke="#111" stroke-width="1.500"/>
<path d="M1612,1008v-5a1.500,1.500 0 0 1 3,0v-3a1.500,1.500 0 0 1 3,0a1.500,1.500 0 0 1 3,0v2a1.500,1.500 0 0 1 3,0v9c0,3 -2,5 -5,5c-4,0 -6,-3 -8,-7z" fill="#ddd" stroke="#333"/>
<path d="M1641,997v6M1634,1008h14" stroke="#333"/><ellipse cx="1641" cy="1008" rx="7" ry="6" fill="none" stroke="#333"/><circle cx="1641" cy="1008" r="3" fill="#dc6" stroke="#333"/>
<rect x="1658" y="998" width="14" height="16" fill="#cde" stroke="#235"/><rect x="1663" y="1006" width="11" height="10" fill="#ddd" stroke="#235"/><path d="M1661,1002l6,5" stroke="#235"/>

<!-- command panel -->
<rect x="1498" y="85" width="182" height="878" fill="#c0c0c0"/>
<g>
<g fill="#c8c8c8" stroke="#b0b0b0"><path d="M1500,112V90q0,-2 2,-2H1526V112"/><path d="M1529,112V88h27V112"/><path d="M1558,112V88h25V112"/><path d="M1586,112V88h25V112"/><path d="M1614,112V88h25V112"/><path d="M1643,112V88h27V112"/></g>
<path d="M1512,90l2,5l5,1l-4,3l1,5l-4,-3l-4,3l1,-5l-4,-3l5,-1z" fill="#fff8b0"/><path d="M1515,97L1525,109" stroke="#333" stroke-width="2"/>
<path d="M1534,108C1535,98 1542,92 1551,91V96C1545,97 1541,102 1540,108Z" fill="#556" stroke="#223"/><path d="M1537,108C1538,100 1544,94 1551,93" fill="none" stroke="#9ab" stroke-width="1.500"/>
<rect x="1567" y="89" width="8" height="8" fill="#ccd" stroke="#334"/><path d="M1571,97v3M1563,103v-3h16v3M1571,100v3" fill="none" stroke="#334"/><rect x="1560" y="103" width="6" height="5" fill="#ccd" stroke="#334"/><rect x="1568" y="103" width="6" height="5" fill="#ccd" stroke="#334"/><rect x="1576" y="103" width="6" height="5" fill="#ccd" stroke="#334"/>
<circle cx="1601" cy="100" r="7" fill="#c8c8c8" stroke="#222" stroke-width="2"/><path d="M1597,96l8,8M1605,96l-8,8M1601,94v12M1595,100h12" stroke="#a33"/><path d="M1592,95q-2,5 0,10M1589,93q-2,7 0,14" fill="none" stroke="#333"/>
<rect x="1620" y="90" width="19" height="17" fill="#223" stroke="#111"/><rect x="1622" y="92" width="15" height="13" fill="#d8e0f0"/><path d="M1628,93l6,11h-8z" fill="#c33"/><rect x="1623" y="92" width="5" height="8" fill="#238"/><rect x="1625" y="107" width="9" height="2" fill="#333"/>
<path d="M1650,91h15l3,3h-4l-3,-1h-2v0h-9z" fill="#333"/><rect x="1655" y="93" width="4" height="16" fill="#a03a30"/>
</g>
<rect x="1505" y="117" width="145" height="20" fill="#dedede"/><path d="M1505,137V117H1650" fill="none" stroke="#111"/><path d="M1505,137H1650" stroke="#eee"/>
<rect x="1655" y="118" width="16" height="19" fill="#585858"/>
<rect x="1505" y="143" width="166" height="22" fill="#dedede"/><path d="M1505,165V143H1671" fill="none" stroke="#777" stroke-width="2"/>
<text x="1509" y="158" textLength="56" lengthAdjust="spacingAndGlyphs">Modifier List</text>
<rect x="1655" y="146" width="15" height="17" fill="#eee" stroke="#aaa"/><path d="M1659,153h7l-3.500,4z" fill="#000"/>
<rect x="1506" y="171" width="164" height="182" fill="#dedede"/><path d="M1506,353V171H1670" fill="none" stroke="#777"/><path d="M1506,353H1670V171" fill="none" stroke="#f5f5f5"/>
<g>
<rect x="1519" y="366" width="8" height="8" fill="#c8c8c8" stroke="#8a8a8a"/><path d="M1512,370h7M1527,366h1v8" stroke="#8a8a8a"/>
<path d="M1539,362V378M1574,362V378M1634,362V378" stroke="#8a8a8a"/>
<rect x="1544.500" y="358.500" width="23" height="22" fill="#c4c4c4" stroke="#8a8a8a"/><path d="M1553,365V377M1559,365V377" stroke="#8a8a8a"/><path d="M1551,364h4M1557,364h4" stroke="#999"/>
<path d="M1586,364l8,11l8,-11M1594,375v3" fill="none" stroke="#9a9a9a"/><circle cx="1593" cy="375" r="2" fill="none" stroke="#8a8a8a"/>
<rect x="1611" y="366" width="9" height="11" rx="4" fill="none" stroke="#8a8a8a"/><path d="M1612,371h7" stroke="#8a8a8a"/>
<rect x="1645" y="364" width="14" height="14" fill="#eee" stroke="#222"/><rect x="1645" y="364" width="14" height="4" fill="#224"/><path d="M1651,370h8M1647,373h3M1653,375h5" stroke="#333" stroke-dasharray="2 1"/>
</g>
<path d="M1501,393.500H1675" stroke="#111" stroke-width="1.500"/>
<rect x="1500.500" y="402.500" width="174" height="560" fill="#c0c0c0" stroke="#888"/>
<path d="M1501,962.500H1675" stroke="#eee"/>
<rect x="1498" y="964" width="182" height="8" fill="#c0c0c0"/>

<!-- taskbar strip -->
<rect x="0" y="1021" width="1680" height="3" fill="#fff"/>
<rect x="0" y="1021" width="100" height="3" fill="#6cc46c"/>
<rect x="102" y="1021" width="196" height="3" fill="#ececec"/>
<rect x="300" y="1021" width="143" height="3" fill="#c8c8d0"/>
<rect x="446" y="1021" width="142" height="3" fill="#c8c8d0"/>
<rect x="591" y="1021" width="142" height="3" fill="#c8c8d0"/>
<rect x="736" y="1021" width="144" height="3" fill="#a88a40"/>
<rect x="884" y="1021" width="142" height="3" fill="#c8c8d0"/>
<rect x="1029" y="1021" width="144" height="3" fill="#c8c8d0"/>
<rect x="1176" y="1021" width="140" height="3" fill="#8e8e98"/>
<rect x="1319" y="1021" width="160" height="3" fill="#c8c8d0"/>
</svg>
</body></html>
